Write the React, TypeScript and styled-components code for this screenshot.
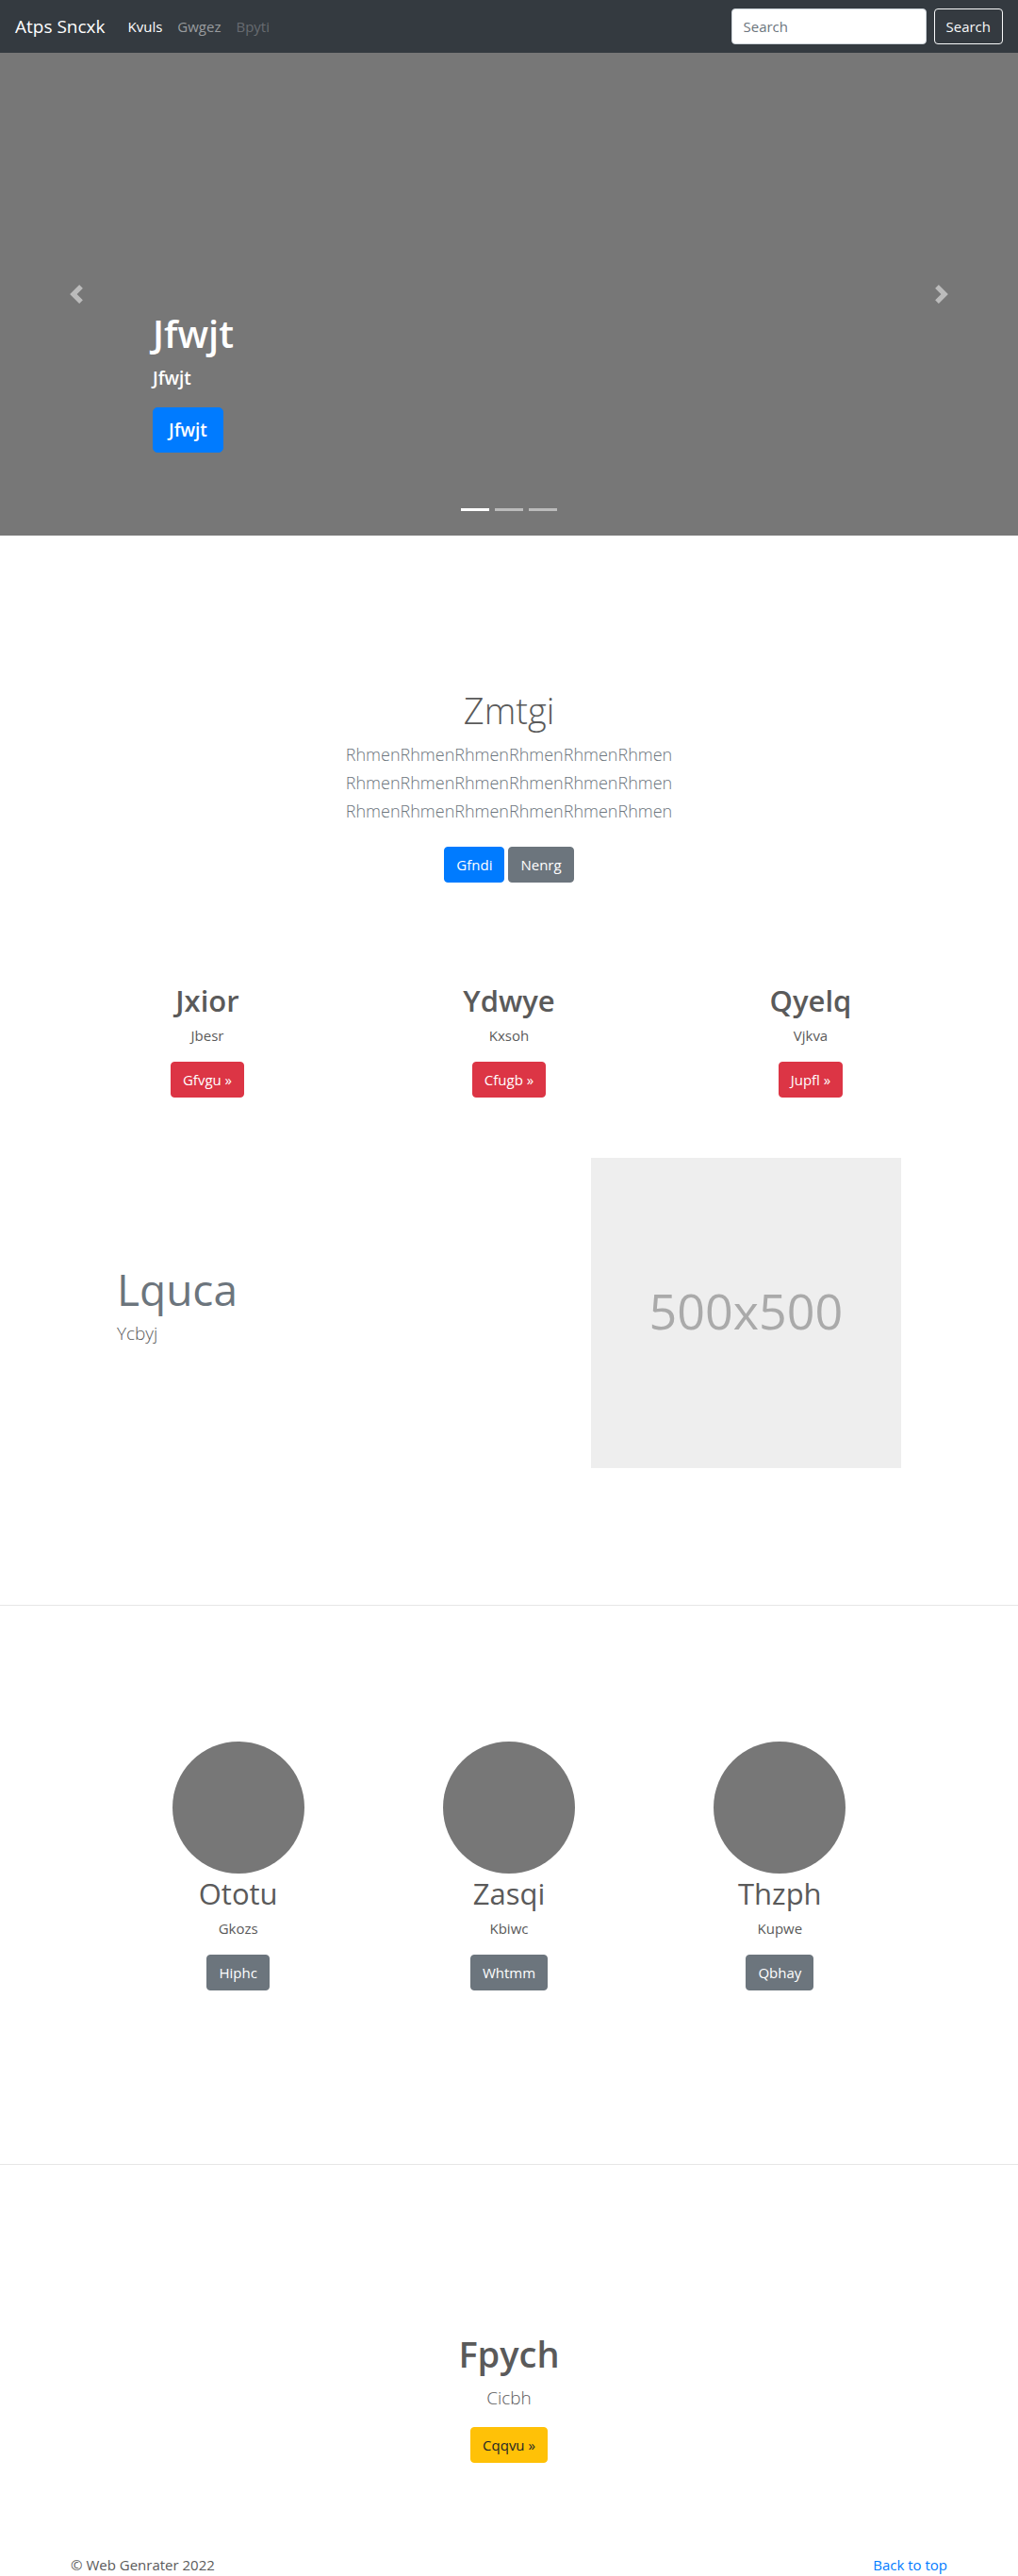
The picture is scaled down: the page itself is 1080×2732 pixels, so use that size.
import React from "react";
import styled, { createGlobalStyle, css } from "styled-components";

const GlobalStyle = createGlobalStyle`
  *, *::before, *::after { box-sizing: border-box; }
  body {
    margin: 0;
    background: #fff;
    color: #5a5a5a;
    font-family: "Open Sans", "Noto Sans", sans-serif;
    font-size: 15px;
    line-height: 24px;
  }
  h1, h2, p { margin: 0; }
`;

const Navbar = styled.header`
  display: flex;
  align-items: center;
  justify-content: space-between;
  padding: 9px 16px;
  background: #343a40;
`;

const NavGroup = styled.nav`
  display: flex;
  align-items: center;
  gap: 16px;
`;

const Brand = styled.a`
  margin-right: 8px;
  color: #fff;
  font-size: 19px;
  line-height: 30px;
  text-decoration: none;
`;

const NavLink = styled.a<{ $tone: string }>`
  color: ${(p) => p.$tone};
  text-decoration: none;
`;

const SearchForm = styled.form`
  display: flex;
  gap: 8px;
`;

const SearchInput = styled.input`
  width: 207px;
  height: 38px;
  padding: 6px 12px;
  border: 1px solid #ced4da;
  border-radius: 4px;
  background: #fff;
  color: #495057;
  font: inherit;
  &::placeholder { color: #6c757d; opacity: 1; }
`;

const tones = {
  primary: css`background: #007bff; border-color: #007bff; color: #fff;`,
  secondary: css`background: #6c757d; border-color: #6c757d; color: #fff;`,
  danger: css`background: #dc3545; border-color: #dc3545; color: #fff;`,
  warning: css`background: #ffc107; border-color: #ffc107; color: #212529;`,
  outline: css`background: transparent; border-color: #f8f9fa; color: #f8f9fa;`,
};

const Button = styled.button<{ $tone: keyof typeof tones; $large?: boolean }>`
  padding: ${(p) => (p.$large ? "8px 16px" : "6px 12px")};
  border: 1px solid;
  border-radius: ${(p) => (p.$large ? "5px" : "4px")};
  font: inherit;
  font-size: ${(p) => (p.$large ? "19px" : "15px")};
  line-height: ${(p) => (p.$large ? "30px" : "24px")};
  cursor: pointer;
  ${(p) => tones[p.$tone]}
`;

const Carousel = styled.section`
  position: relative;
  display: flex;
  flex-direction: column;
  justify-content: flex-end;
  height: 512px;
  padding: 0 15% 88px;
  background: #777;
  color: #fff;
`;

const Caption = styled.div`
  display: flex;
  flex-direction: column;
  align-items: flex-start;
  font-weight: 600;
`;

const CarouselControl = styled.button<{ $side: "left" | "right" }>`
  position: absolute;
  top: 0;
  bottom: 0;
  ${(p) => p.$side}: 0;
  display: flex;
  align-items: center;
  justify-content: center;
  width: 15%;
  padding: 0;
  border: 0;
  background: none;
  color: #fff;
  opacity: 0.5;
`;

const Indicators = styled.div`
  position: absolute;
  left: 0;
  right: 0;
  bottom: 26px;
  display: flex;
  justify-content: center;
  gap: 6px;
`;

const Indicator = styled.button<{ $active?: boolean }>`
  width: 30px;
  height: 3px;
  padding: 0;
  border: 0;
  background: #fff;
  opacity: ${(p) => (p.$active ? 1 : 0.5)};
`;

const Title = styled.h1<{ $weight: number; $large?: boolean }>`
  margin-bottom: 8px;
  font-size: ${(p) => (p.$large ? "40px" : "38px")};
  font-weight: ${(p) => p.$weight};
  line-height: 48px;
`;

const Subtitle = styled.h2<{ $weight: number }>`
  margin-bottom: 6px;
  font-size: 31px;
  font-weight: ${(p) => p.$weight};
  line-height: 38px;
`;

const Text = styled.p`
  margin-bottom: 16px;
`;

const Lead = styled.p<{ $weight?: number; $muted?: boolean }>`
  margin-bottom: 16px;
  color: ${(p) => (p.$muted ? "#6c757d" : "inherit")};
  font-size: ${(p) => (p.$muted ? "18px" : "19px")};
  font-weight: ${(p) => p.$weight ?? 300};
  line-height: 30px;
`;

const Hero = styled.section<{ $top: number; $bottom: number }>`
  display: flex;
  flex-direction: column;
  align-items: center;
  padding: ${(p) => p.$top}px 16px ${(p) => p.$bottom}px;
  text-align: center;
`;

const ButtonRow = styled.div`
  display: flex;
  gap: 4px;
  margin-top: 7px;
`;

const Columns = styled.section<{ $width: number }>`
  display: grid;
  grid-template-columns: repeat(3, 1fr);
  max-width: ${(p) => p.$width}px;
  margin: 0 auto;
`;

const Column = styled.article`
  display: flex;
  flex-direction: column;
  align-items: center;
  text-align: center;
`;

const Avatar = styled.div`
  width: 140px;
  height: 140px;
  margin-bottom: 2px;
  border-radius: 50%;
  background: #777;
`;

const Featurette = styled.section`
  display: grid;
  grid-template-columns: 7fr 5fr;
  align-items: center;
  max-width: 862px;
  margin: 64px auto 145px;
`;

const FeatureText = styled.div`
  padding: 0 15px;
`;

const FeatureTitle = styled.h2`
  margin-bottom: 6px;
  color: #6c757d;
  font-size: 46px;
  font-weight: 400;
  line-height: 52px;
`;

const Placeholder = styled.div`
  display: flex;
  align-items: center;
  justify-content: center;
  margin: 0 15px;
  padding-bottom: 6px;
  aspect-ratio: 1;
  background: #eee;
  color: #aaa;
  font-size: 52px;
`;

const Divider = styled.hr`
  height: 1px;
  margin: 0;
  border: 0;
  background: #e6e6e6;
`;

const Team = styled.div`
  padding: 144px 0 184px;
`;

const Footer = styled.footer`
  display: flex;
  justify-content: space-between;
  max-width: 960px;
  margin: 0 auto;
  padding: 0 15px;
`;

const FooterLink = styled.a`
  color: #007bff;
  text-decoration: none;
`;

const Chevron = ({ d }: { d: string }) => (
  <svg width="20" height="20" viewBox="0 0 8 8" fill="currentColor" aria-hidden="true">
    <path d={d} />
  </svg>
);

const services = [
  { title: "Jxior", text: "Jbesr", action: "Gfvgu »" },
  { title: "Ydwye", text: "Kxsoh", action: "Cfugb »" },
  { title: "Qyelq", text: "Vjkva", action: "Jupfl »" },
];

const people = [
  { title: "Ototu", text: "Gkozs", action: "Hiphc" },
  { title: "Zasqi", text: "Kbiwc", action: "Whtmm" },
  { title: "Thzph", text: "Kupwe", action: "Qbhay" },
];

export default function App() {
  return (
    <>
      <GlobalStyle />
      <Navbar id="top">
        <NavGroup>
          <Brand href="#top">Atps Sncxk</Brand>
          <NavLink href="#top" $tone="#fff">Kvuls</NavLink>
          <NavLink href="#top" $tone="#999c9f">Gwgez</NavLink>
          <NavLink href="#top" $tone="#676b70" aria-disabled="true">Bpyti</NavLink>
        </NavGroup>
        <SearchForm onSubmit={(e) => e.preventDefault()}>
          <SearchInput type="search" placeholder="Search" aria-label="Search" />
          <Button $tone="outline" type="submit">Search</Button>
        </SearchForm>
      </Navbar>
      <main>
        <Carousel>
          <Caption>
            <Title $weight={600} $large>Jfwjt</Title>
            <Lead $weight={600}>Jfwjt</Lead>
            <Button $tone="primary" $large>Jfwjt</Button>
          </Caption>
          <CarouselControl $side="left" aria-label="Previous">
            <Chevron d="M5.25 0l-4 4 4 4 1.5-1.5L4.25 4l2.5-2.5L5.25 0z" />
          </CarouselControl>
          <CarouselControl $side="right" aria-label="Next">
            <Chevron d="M2.75 0l-1.5 1.5L3.75 4l-2.5 2.5L2.75 8l4-4-4-4z" />
          </CarouselControl>
          <Indicators>
            <Indicator $active aria-label="Slide 1" />
            <Indicator aria-label="Slide 2" />
            <Indicator aria-label="Slide 3" />
          </Indicators>
        </Carousel>

        <Hero $top={161} $bottom={106}>
          <Title $weight={300}>Zmtgi</Title>
          <Lead $muted>
            RhmenRhmenRhmenRhmenRhmenRhmen<br />
            RhmenRhmenRhmenRhmenRhmenRhmen<br />
            RhmenRhmenRhmenRhmenRhmenRhmen
          </Lead>
          <ButtonRow>
            <Button $tone="primary">Gfndi</Button>
            <Button $tone="secondary">Nenrg</Button>
          </ButtonRow>
        </Hero>

        <Columns $width={960}>
          {services.map((s) => (
            <Column key={s.title}>
              <Subtitle $weight={600}>{s.title}</Subtitle>
              <Text>{s.text}</Text>
              <Button $tone="danger">{s.action}</Button>
            </Column>
          ))}
        </Columns>

        <Featurette>
          <FeatureText>
            <FeatureTitle>Lquca</FeatureTitle>
            <Lead>Ycbyj</Lead>
          </FeatureText>
          <Placeholder role="img" aria-label="500x500">500x500</Placeholder>
        </Featurette>

        <Divider />
        <Team>
          <Columns $width={862}>
            {people.map((p) => (
              <Column key={p.title}>
                <Avatar />
                <Subtitle $weight={400}>{p.title}</Subtitle>
                <Text>{p.text}</Text>
                <Button $tone="secondary">{p.action}</Button>
              </Column>
            ))}
          </Columns>
        </Team>
        <Divider />

        <Hero $top={176} $bottom={96}>
          <Title $weight={600}>Fpych</Title>
          <Lead>Cicbh</Lead>
          <Button $tone="warning">Cqqvu »</Button>
        </Hero>
      </main>
      <Footer>
        <p>© Web Genrater 2022</p>
        <FooterLink href="#top">Back to top</FooterLink>
      </Footer>
    </>
  );
}
